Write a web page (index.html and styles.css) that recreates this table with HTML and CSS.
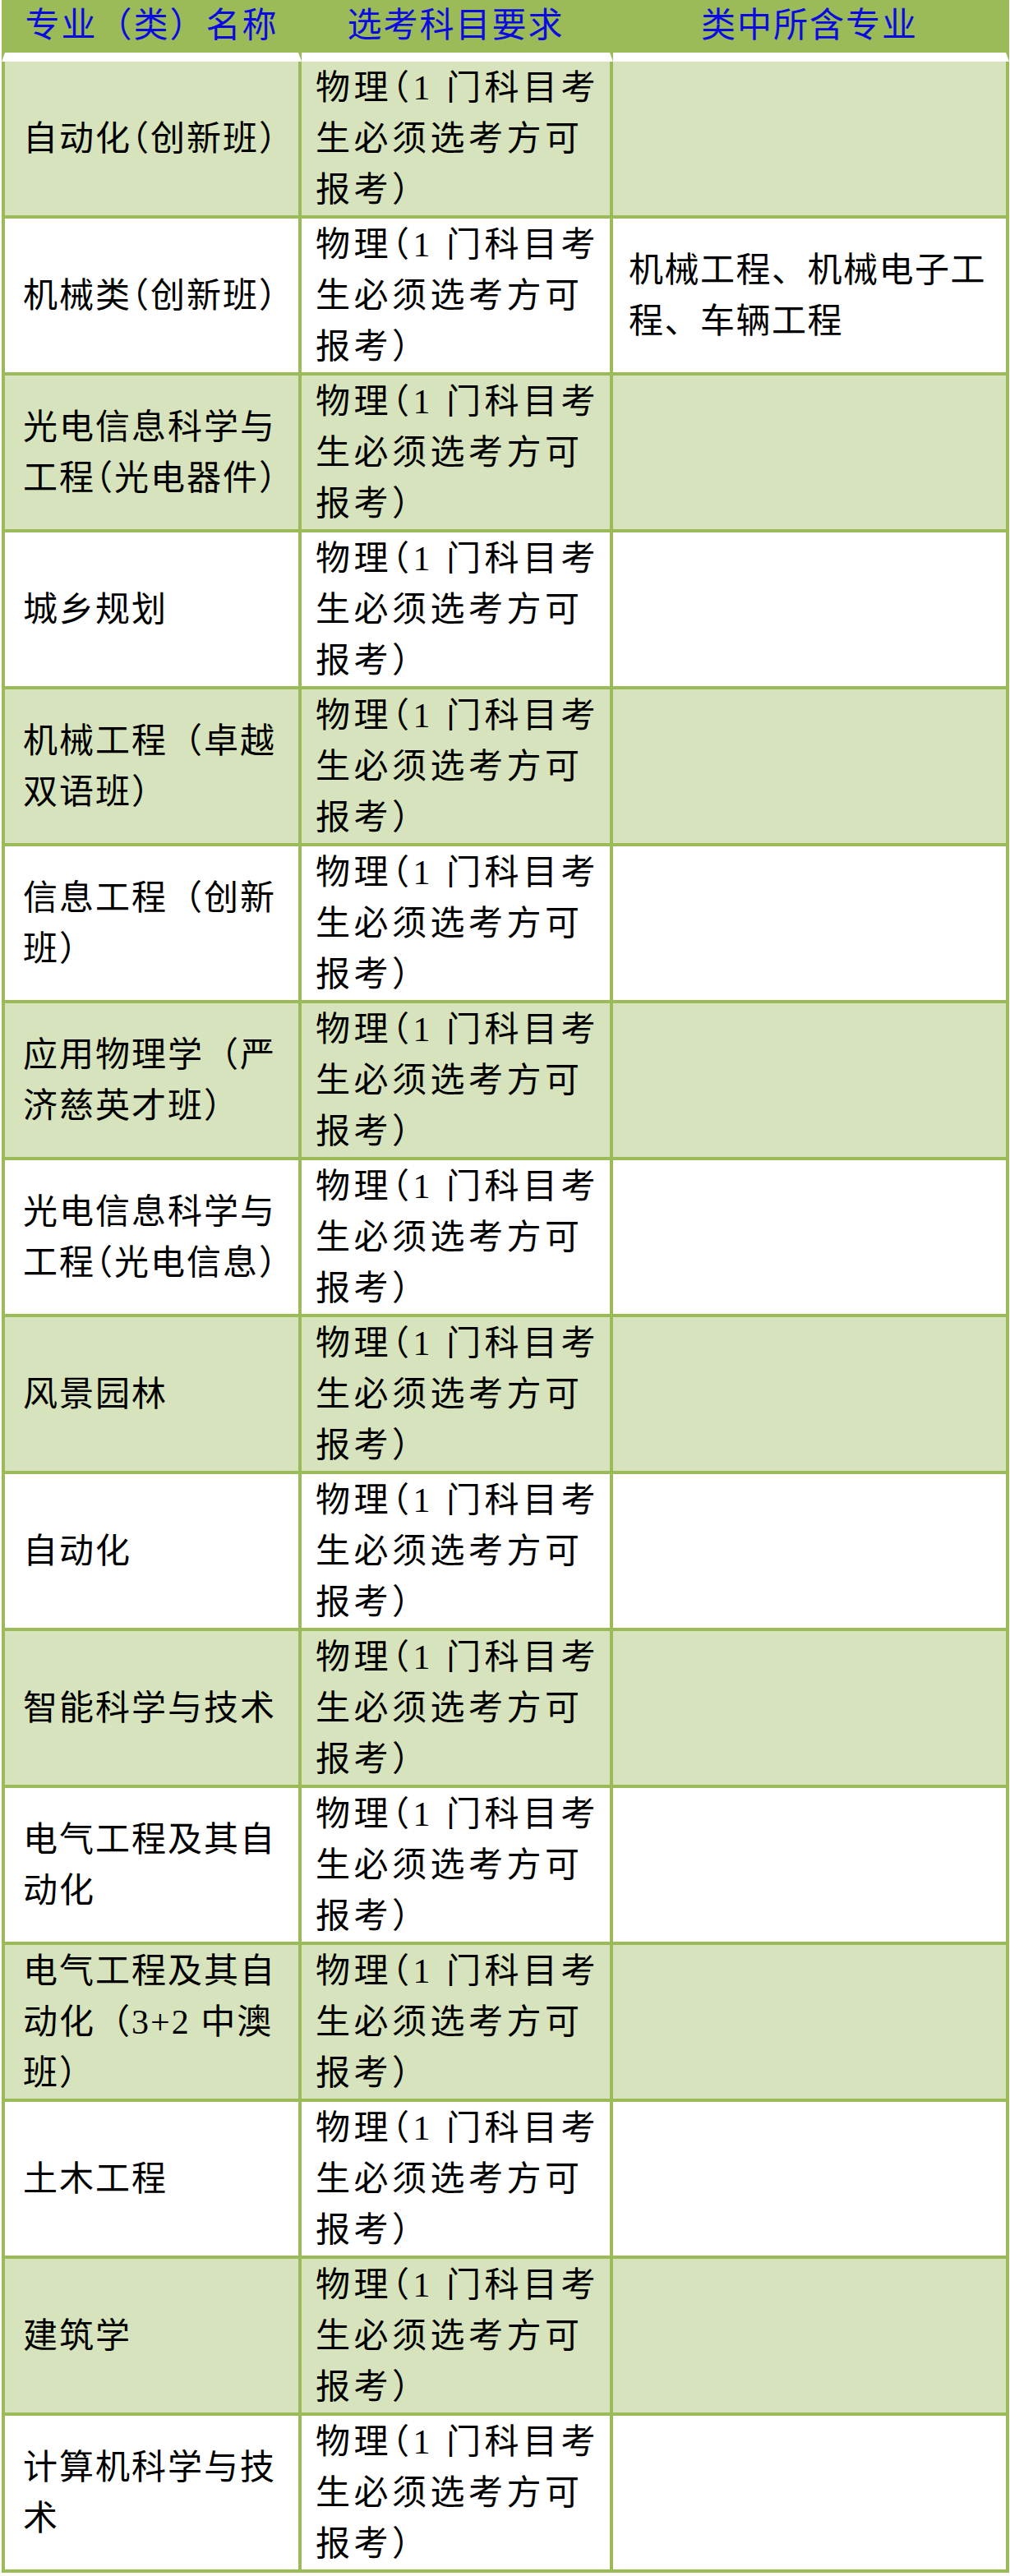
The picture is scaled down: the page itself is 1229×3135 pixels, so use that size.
FILE: index.html
```html
<!DOCTYPE html>
<html lang="zh-CN">
<head>
<meta charset="utf-8">
<title>专业选考科目要求</title>
<link rel="stylesheet" href="styles.css">
</head>
<body>
<table class="majors">
  <thead>
    <tr>
      <th class="c1">专业（类）名称</th>
      <th class="c2">选考科目要求</th>
      <th class="c3">类中所含专业</th>
    </tr>
  </thead>
  <tbody>
    <tr class="alt">
      <td class="c1">自动化<span class="hp">（</span>创新班）</td>
      <td class="c2">物理<span class="hp">（</span>1 门科目考<br>生必须选考方可<br>报考）</td>
      <td class="c3"></td>
    </tr>
    <tr>
      <td class="c1">机械类<span class="hp">（</span>创新班）</td>
      <td class="c2">物理<span class="hp">（</span>1 门科目考<br>生必须选考方可<br>报考）</td>
      <td class="c3">机械工程、机械电子工<br>程、车辆工程</td>
    </tr>
    <tr class="alt">
      <td class="c1">光电信息科学与<br>工程<span class="hp">（</span>光电器件）</td>
      <td class="c2">物理<span class="hp">（</span>1 门科目考<br>生必须选考方可<br>报考）</td>
      <td class="c3"></td>
    </tr>
    <tr>
      <td class="c1">城乡规划</td>
      <td class="c2">物理<span class="hp">（</span>1 门科目考<br>生必须选考方可<br>报考）</td>
      <td class="c3"></td>
    </tr>
    <tr class="alt">
      <td class="c1">机械工程（卓越<br>双语班）</td>
      <td class="c2">物理<span class="hp">（</span>1 门科目考<br>生必须选考方可<br>报考）</td>
      <td class="c3"></td>
    </tr>
    <tr>
      <td class="c1">信息工程（创新<br>班）</td>
      <td class="c2">物理<span class="hp">（</span>1 门科目考<br>生必须选考方可<br>报考）</td>
      <td class="c3"></td>
    </tr>
    <tr class="alt">
      <td class="c1">应用物理学（严<br>济慈英才班）</td>
      <td class="c2">物理<span class="hp">（</span>1 门科目考<br>生必须选考方可<br>报考）</td>
      <td class="c3"></td>
    </tr>
    <tr>
      <td class="c1">光电信息科学与<br>工程<span class="hp">（</span>光电信息）</td>
      <td class="c2">物理<span class="hp">（</span>1 门科目考<br>生必须选考方可<br>报考）</td>
      <td class="c3"></td>
    </tr>
    <tr class="alt">
      <td class="c1">风景园林</td>
      <td class="c2">物理<span class="hp">（</span>1 门科目考<br>生必须选考方可<br>报考）</td>
      <td class="c3"></td>
    </tr>
    <tr>
      <td class="c1">自动化</td>
      <td class="c2">物理<span class="hp">（</span>1 门科目考<br>生必须选考方可<br>报考）</td>
      <td class="c3"></td>
    </tr>
    <tr class="alt">
      <td class="c1">智能科学与技术</td>
      <td class="c2">物理<span class="hp">（</span>1 门科目考<br>生必须选考方可<br>报考）</td>
      <td class="c3"></td>
    </tr>
    <tr>
      <td class="c1">电气工程及其自<br>动化</td>
      <td class="c2">物理<span class="hp">（</span>1 门科目考<br>生必须选考方可<br>报考）</td>
      <td class="c3"></td>
    </tr>
    <tr class="alt">
      <td class="c1">电气工程及其自<br>动化（3+2 中澳<br>班）</td>
      <td class="c2">物理<span class="hp">（</span>1 门科目考<br>生必须选考方可<br>报考）</td>
      <td class="c3"></td>
    </tr>
    <tr>
      <td class="c1">土木工程</td>
      <td class="c2">物理<span class="hp">（</span>1 门科目考<br>生必须选考方可<br>报考）</td>
      <td class="c3"></td>
    </tr>
    <tr class="alt">
      <td class="c1">建筑学</td>
      <td class="c2">物理<span class="hp">（</span>1 门科目考<br>生必须选考方可<br>报考）</td>
      <td class="c3"></td>
    </tr>
    <tr>
      <td class="c1">计算机科学与技<br>术</td>
      <td class="c2">物理<span class="hp">（</span>1 门科目考<br>生必须选考方可<br>报考）</td>
      <td class="c3"></td>
    </tr>
  </tbody>
</table>
</body>
</html>
```

FILE: styles.css
```css
html, body {
  margin: 0;
  padding: 0;
  background: #ffffff;
}

body {
  font-family: "Liberation Serif", "Noto Sans CJK SC", serif;
  color: #000000;
}

.majors {
  border-collapse: separate;
  border-spacing: 0;
  table-layout: fixed;
  width: 1226px;
  margin-left: 2px;
}

.majors th,
.majors td {
  box-sizing: border-box;
  font-size: 42px;
  font-weight: 400;
  white-space: nowrap;
  border-right: 4px solid #9bbb59;
}

.majors th.c1,
.majors td.c1 {
  border-left: 4px solid #9bbb59;
}

.majors th {
  height: 75px;
  padding: 0 0 2px 0;
  background: #9bbb59;
  border-bottom: 11px solid #ffffff;
  color: #0b0be0;
  text-align: center;
  vertical-align: middle;
  line-height: 62px;
  letter-spacing: 2px;
}

.majors th.c1 { width: 365px; }
.majors th.c2 { width: 379px; }
.majors th.c3 { width: 482px; }

.majors td {
  height: 191px;
  padding: 0;
  border-bottom: 4px solid #9bbb59;
  line-height: 62px;
  vertical-align: middle;
  text-align: left;
  background: #ffffff;
}

.majors tr.alt td {
  background: #d6e3bc;
}

.majors td.c1 {
  padding-left: 22px;
  letter-spacing: 2px;
}

.majors td.c2 {
  padding-left: 17px;
  letter-spacing: 4.5px;
}

.majors td.c3 {
  padding-left: 19px;
  letter-spacing: 1.5px;
}

.hp {
  font-feature-settings: "halt";
}
```
